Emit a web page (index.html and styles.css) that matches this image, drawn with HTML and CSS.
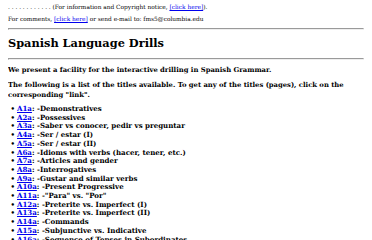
FILE: index.html
```html
<!DOCTYPE html>
<html lang="en">
<head>
    <meta charset="UTF-8">
    <title>Spanish Language Drills</title>
    <link rel="stylesheet" href="styles.css">
</head>
<body>
    <p class="small">. . . . . . . . . . . . (For information and Copyright notice, <a href="#">[click here]</a>).</p>
    <p class="small">For comments, <a href="#">[click here]</a> or send e-mail to: fms5@columbia.edu</p>
    <hr>
    <h1>Spanish Language Drills</h1>
    <hr>
    <div class="main">
        <p>We present a facility for the interactive drilling in Spanish Grammar.</p>
        <p>The following is a list of the titles available. To get any of the titles (pages), click on the corresponding "link".</p>
        <ul class="drills">
            <li><a href="#">A1a</a>: -Demonstratives</li>
            <li><a href="#">A2a</a>: -Possessives</li>
            <li><a href="#">A3a</a>: -Saber vs conocer, pedir vs preguntar</li>
            <li><a href="#">A4a</a>: -Ser / estar (I)</li>
            <li><a href="#">A5a</a>: -Ser / estar (II)</li>
            <li><a href="#">A6a</a>: -Idioms with verbs (hacer, tener, etc.)</li>
            <li><a href="#">A7a</a>: -Articles and gender</li>
            <li><a href="#">A8a</a>: -Interrogatives</li>
            <li><a href="#">A9a</a>: -Gustar and similar verbs</li>
            <li><a href="#">A10a</a>: -Present Progressive</li>
            <li><a href="#">A11a</a>: -"Para" vs. "Por"</li>
            <li><a href="#">A12a</a>: -Preterite vs. Imperfect (I)</li>
            <li><a href="#">A13a</a>: -Preterite vs. Imperfect (II)</li>
            <li><a href="#">A14a</a>: -Commands</li>
            <li><a href="#">A15a</a>: -Subjunctive vs. Indicative</li>
            <li><a href="#">A16a</a>: -Sequence of Tenses in Subordinates</li>
        </ul>
    </div>
</body>
</html>
```

FILE: styles.css
```css
body {
    margin: 2px 8px 8px 8px;
    font-family: "DejaVu Serif", serif;
    font-size: 7px;
    color: #000;
    background: #fff;
}

a {
    color: #0000ee;
}

.small {
    font-size: 5.85px;
    line-height: 10px;
    margin: 0 0 2px 0;
}

hr {
    margin: 4px 0;
}

h1 {
    font-size: 11.35px;
    line-height: 18px;
    margin: 4px 0 6px 0;
}

.main {
    font-weight: bold;
}

.main p {
    font-size: 6.8px;
    line-height: 10px;
    margin: 5px 0 4px 0;
}

.drills {
    margin: 5px 0 0 0;
    padding-left: 9px;
    list-style: none;
    line-height: 8.7px;
    font-size: 7.05px;
}

.drills li::before {
    content: "\2022";
    display: inline-block;
    width: 6.5px;
    margin-left: -6.5px;
}
```
